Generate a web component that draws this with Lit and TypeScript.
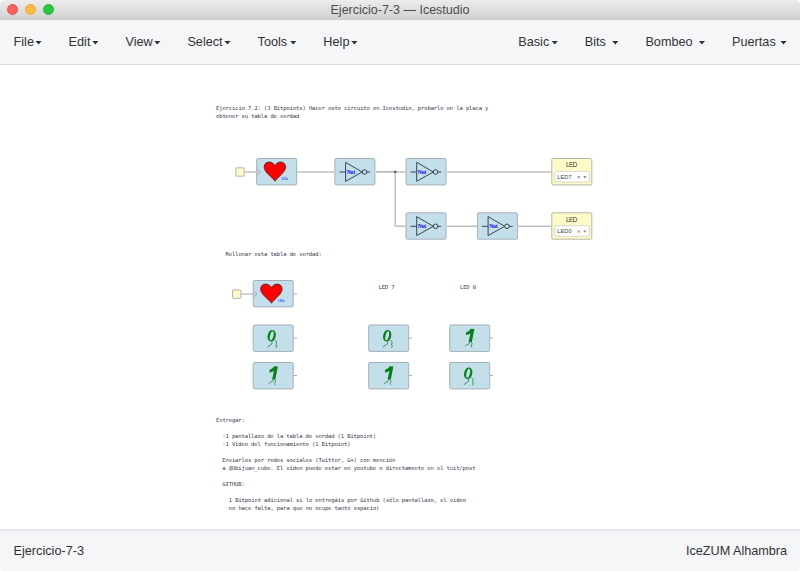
import { LitElement, html, svg, css } from "lit";
import { customElement } from "lit/decorators.js";

interface Menu { label: string; width: number; }

const LEFT: Menu[] = [
  { label: "File", width: 28.5 }, { label: "Edit", width: 30.3 }, { label: "View", width: 35.3 },
  { label: "Select", width: 43.6 }, { label: "Tools", width: 39.2 }, { label: "Help", width: 34.5 },
];
const RIGHT: Menu[] = [
  { label: "Basic", width: 40 }, { label: "Bits", width: 34 },
  { label: "Bombeo", width: 60 }, { label: "Puertas", width: 55 },
];

// [x, baseline, text]
const NOTES: [number, number, string][] = [
  [216, 109.5, "Ejercicio 7.2: (3 Bitpoints) Hacer este circuito en Icestudio, probarlo en la placa y"],
  [216, 117.5, "obtener su tabla de verdad"],
  [225.6, 255.5, "Rellenar esta tabla de verdad:"],
  [378.5, 289, "LED 7"],
  [460, 289, "LED 0"],
  [216, 421.7, "Entregar:"],
  [222.3, 437.7, "-1 pantallazo de la tabla de verdad (1 Bitpoint)"],
  [222.3, 445.7, "-1 Vídeo del funcionamiento (1 Bitpoint)"],
  [222.3, 461.9, "Enviarlos por redes sociales (Twitter, G+) con mención"],
  [222.3, 469.9, "a @Obijuan_cube. El vídeo puede estar en youtube o directamente en el tuit/post"],
  [222.3, 485.8, "GITHUB:"],
  [228.8, 501.8, "1 Bitpoint adicional si lo entregáis por Github (sólo pantallazo, el vídeo"],
  [228.8, 509.8, "no hace falta, para que no ocupe tanto espacio)"],
];

const block = (x: number, y: number, content: unknown) => svg`
  <g transform="translate(${x} ${y})">
    <rect class="block" x="0.5" y="0.5" width="40" height="26.4" rx="1.3"></rect>
    ${content}
  </g>`;

const heart = svg`
  <path class="wire" d="M1 11.3L4.3 14L1 16.7"></path>
  <path class="heart" d="M18.8 23.3C16.5 19.5 7.9 14.5 7.9 9C7.9 5.8 10.3 4 13 4C16 4 18 5.7 18.8 8C19.6 5.7 21.6 4 24.4 4C27.1 4 29.4 5.8 29.4 9C29.4 14.5 21 19.5 18.8 23.3Z"></path>
  <text class="tiny" x="24.8" y="21.8" textLength="7.2">1Hz</text>`;

const not = svg`
  <path class="gate" d="M5 14H11.2M11.2 4.3V23.3L27.8 14ZM32.3 14H35.8"></path>
  <circle class="gate" cx="30.1" cy="14" r="2.3"></circle>
  <text class="not" x="12.3" y="16.1" textLength="8.4">Not</text>`;

const zero = svg`
  <path class="digit" fill-rule="evenodd" transform="rotate(14 19 11.3)"
    d="M19 5.5C21.5 5.5 23 8 23 11.3S21.5 17.1 19 17.1S15 14.6 15 11.3S16.5 5.5 19 5.5ZM19 6.7C17.9 6.7 17.3 8.8 17.3 11.3S17.9 15.9 19 15.9S20.7 13.8 20.7 11.3S20.1 6.7 19 6.7Z"></path>
  <path class="legs" d="M19.4 17Q20 20 17.6 20.6Q15.4 21 15.2 22.8M22.4 15.6Q24.9 17.5 23.6 19.4Q22.5 21.2 24.4 21.5L23.2 23.4"></path>`;

const one = svg`
  <path class="digit" d="M17 7.8Q20.2 7 21.6 4.3L25.2 4.6L22.6 17.6H19.4L21.2 8.9Q19.4 10.1 16.7 10.4Z"></path>
  <path class="legs" d="M20.6 17.6Q20 20.1 17.8 20.2L15.9 21.8M21.7 17.5Q23.8 19 22.5 20.4Q21.2 21.6 22.5 22.8"></path>`;

const led = (y: number, name: string) => svg`
  <g transform="translate(551.3 ${y})">
    <rect class="led" x="0.5" y="0.5" width="40" height="26.4" rx="1.3"></rect>
    <text class="led-title" x="20.4" y="9.3" text-anchor="middle" textLength="11.4">LED</text>
    <rect class="field" x="3.5" y="13.4" width="34.4" height="10.6" rx="1"></rect>
    <text class="led-name" x="6" y="20.9" textLength="14.3">${name}</text>
    <path class="clear" d="M26.4 18.2l2 2m0-2l-2 2"></path>
    <path class="arrow" d="M31.9 18.1h3.4l-1.7 2.3z"></path>
  </g>`;

@customElement("app-root")
export class AppRoot extends LitElement {
  static styles = css`
    :host { display: block; }
    .window { height: 571px; display: flex; flex-direction: column; overflow: hidden; background: #fff;
      border-radius: 5px 5px 4px 4px; font: 12.7px/16px "Liberation Sans", Arial, sans-serif; color: #333; }
    .title { box-sizing: border-box; height: 20px; flex: none; display: grid; grid-template-columns: 1fr auto 1fr;
      align-items: center; padding: 0 7px; border-bottom: 1px solid #cbcbcb;
      background: linear-gradient(#ececec, #d2d2d2); color: #4c4c4c; font-size: 12.5px; white-space: pre; }
    .lights { display: flex; gap: 7px; }
    .light { box-sizing: border-box; width: 11px; height: 11px; border-radius: 50%; border: 1px solid; }
    .close { background: #fc605c; border-color: #e9524e; }
    .min { background: #fdbc40; border-color: #e9a936; }
    .max { background: #27c840; border-color: #22b338; }
    .bar { box-sizing: border-box; height: 45px; flex: none; display: flex; justify-content: space-between;
      align-items: center; padding: 0 13px 0 13.5px; background: #f5f6f8; border-bottom: 1px solid #d8dfe3; }
    .menus { display: flex; gap: 26.6px; }
    .menu { display: flex; align-items: center; justify-content: space-between; white-space: nowrap; }
    .caret { flex: none; width: 7px; height: 4px; margin-top: 1px; background: #333;
      clip-path: polygon(0 0, 100% 0, 50% 100%); }
    .canvas { flex: 1; min-height: 0; display: block; width: 800px; }
    .status { box-sizing: border-box; height: 42px; flex: none; display: flex; justify-content: space-between;
      align-items: center; padding: 0 13px 0 13.5px; border-top: 2px solid #e4e8ec; background: #f5f6f8; }
    .board { letter-spacing: -.04px; }
    .note { font: 5.5px "DejaVu Sans Mono", monospace; fill: #39394a; white-space: pre; }
    .block { fill: #c2dfea; stroke: #a5b0b5; }
    .led, .pin { fill: #fdfbc8; stroke: #b5b5a8; }
    .field { fill: #fff; stroke: #c8c8c0; stroke-width: .7; }
    .wire { fill: none; stroke: #929799; stroke-width: .8; }
    .net { fill: none; stroke: #c2c2c2; stroke-width: 1.5; }
    .dark { fill: none; stroke: #858585; stroke-width: 1; }
    .heart { fill: #f00; stroke: #40201f; stroke-width: .7; }
    .tiny, .not { font: 4.3px "Liberation Serif", serif; fill: #00f; }
    .not { font-size: 5.7px; font-weight: bold; }
    .gate { fill: none; stroke: #222b30; stroke-width: .85; }
    .digit { fill: #087f18; }
    .legs { fill: none; stroke: #2b9044; stroke-width: .9; }
    .led-title { font: 6.3px "Liberation Sans", sans-serif; fill: #333; }
    .led-name { font: 5.7px "Liberation Sans", sans-serif; fill: #444; }
    .clear { fill: none; stroke: #666; stroke-width: .9; }
    .arrow { fill: #888; }
  `;

  private menus(items: Menu[]) {
    return html`<nav class="menus">${items.map(
      (m) => html`<div class="menu" style="width:${m.width}px"><span>${m.label}</span><i class="caret"></i></div>`,
    )}</nav>`;
  }

  render() {
    return html`<div class="window">
      <header class="title">
        <div class="lights"><i class="light close"></i><i class="light min"></i><i class="light max"></i></div>
        <span>Ejercicio-7-3 — Icestudio</span><span></span>
      </header>
      <div class="bar">${this.menus(LEFT)}${this.menus(RIGHT)}</div>
      <svg class="canvas" viewBox="0 65 800 464">
        <path class="net" d="M245 171.9H256M297 171.9H334M395 171.9H405M447 171.9H551M395.2 172V226.2H405M447 226.2H477M518 226.2H551M241 294H253"></path>
        <path class="dark" d="M376 171.9H395.2"></path>
        <circle cx="395.2" cy="171.9" r="1.3" fill="#666"></circle>
        <path class="wire" d="M294 294h3M294 338h3M294 375.5h3M409 338h3M409 375.5h3M490 338h3M490 375.5h3"></path>
        <rect class="pin" x="235.8" y="167.8" width="8.4" height="8.4" rx="1"></rect>
        <rect class="pin" x="232.5" y="289.9" width="8.4" height="8.4" rx="1"></rect>
        ${block(256.2, 158, heart)} ${block(334.4, 158, not)} ${block(405.5, 158, not)}
        ${block(405.5, 212.3, not)} ${block(476.9, 212.3, not)}
        ${led(158, "LED7")} ${led(212.3, "LED0")}
        ${block(252.7, 280, heart)} ${block(252.7, 324.5, zero)} ${block(252.7, 362, one)}
        ${block(368.2, 324.5, zero)} ${block(368.2, 362, one)}
        ${block(449.2, 324.5, one)} ${block(449.2, 362, zero)}
        ${NOTES.map(([x, y, t]) => svg`<text class="note" x="${x}" y="${y}" textLength="${t.length * 3.205}">${t}</text>`)}
      </svg>
      <footer class="status"><span>Ejercicio-7-3</span><span class="board">IceZUM Alhambra</span></footer>
    </div>`;
  }
}
